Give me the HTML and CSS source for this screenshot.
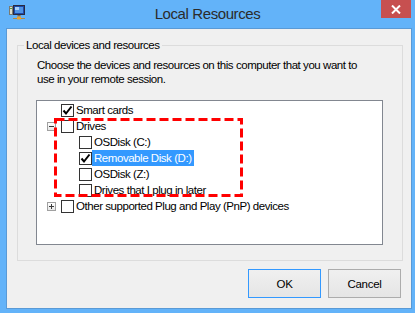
FILE: index.html
```html
<!DOCTYPE html>
<html>
<head>
<meta charset="utf-8">
<link rel="stylesheet" href="styles.css">
</head>
<body>
<div class="window">
  <div class="titlebar">
    <svg class="app-icon" width="20" height="16" viewBox="0 0 20 16">
      <rect x="1.5" y="2.5" width="3" height="8" fill="#dcdccc" stroke="#7a7a70"/>
      <rect x="2" y="4" width="2" height="1" fill="#5aa040"/>
      <rect x="5.5" y="1.5" width="11" height="9" fill="#1c4aa8" stroke="#2a2a40"/>
      <rect x="7" y="3" width="8" height="6" fill="#4f94e6"/>
      <rect x="7" y="3" width="4" height="3" fill="#a8d0f8"/>
      <rect x="9.5" y="11" width="3" height="1.5" fill="#6a6a6a"/>
      <line x1="5" y1="14.5" x2="17" y2="14.5" stroke="#b88a3a"/>
      <rect x="9" y="12.5" width="4" height="3" fill="#e8a030"/>
    </svg>
    <div class="title">Local Resources</div>
    <div class="close">
      <svg width="10" height="9" viewBox="0 0 10 9"><path d="M1 0.5 L9 8.5 M9 0.5 L1 8.5" stroke="#fff" stroke-width="2"/></svg>
    </div>
  </div>
  <div class="client">
    <fieldset class="group">
      <legend class="group-label">Local devices and resources</legend>
      <div class="group-body">
        <p class="desc">Choose the devices and resources on this computer that you want to<br>use in your remote session.</p>
        <div class="tree">
          <div class="row">
            <span class="slot"></span>
            <span class="cb checked"><svg width="11" height="11" viewBox="0 0 11 11"><polyline points="1.5,5.5 4,8.5 9.5,1.5" fill="none" stroke="#000" stroke-width="2"/></svg></span>
            <span class="label">Smart cards</span>
          </div>
          <div class="row">
            <span class="slot exp"><svg width="7" height="7" viewBox="0 0 7 7"><line x1="1" y1="3.5" x2="6" y2="3.5" stroke="#3a3a3a"/></svg></span>
            <span class="cb"></span>
            <span class="label">Drives</span>
          </div>
          <div class="row lvl1">
            <span class="cb"></span>
            <span class="label">OSDisk (C:)</span>
          </div>
          <div class="row lvl1">
            <span class="cb checked"><svg width="11" height="11" viewBox="0 0 11 11"><polyline points="1.5,5.5 4,8.5 9.5,1.5" fill="none" stroke="#000" stroke-width="2"/></svg></span>
            <span class="label selected">Removable Disk (D:)</span>
          </div>
          <div class="row lvl1">
            <span class="cb"></span>
            <span class="label">OSDisk (Z:)</span>
          </div>
          <div class="row lvl1">
            <span class="cb"></span>
            <span class="label">Drives that I plug in later</span>
          </div>
          <div class="row">
            <span class="slot exp"><svg width="7" height="7" viewBox="0 0 7 7"><line x1="1" y1="3.5" x2="6" y2="3.5" stroke="#3a3a3a"/><line x1="3.5" y1="1" x2="3.5" y2="6" stroke="#3a3a3a"/></svg></span>
            <span class="cb"></span>
            <span class="label">Other supported Plug and Play (PnP) devices</span>
          </div>
          <svg class="marker" width="189" height="79" viewBox="0 0 189 79">
            <rect x="1.5" y="1.5" width="186" height="76" fill="none" stroke="#ff0000" stroke-width="3" stroke-dasharray="9 4"/>
          </svg>
        </div>
      </div>
    </fieldset>
    <div class="buttons">
      <button class="btn default">OK</button>
      <button class="btn">Cancel</button>
    </div>
  </div>
</div>
</body>
</html>
```

FILE: styles.css
```css
* { box-sizing: border-box; }
html, body { margin: 0; padding: 0; }
body {
  width: 415px;
  height: 313px;
  overflow: hidden;
  background: #63b3f9;
  font-family: "Liberation Sans", Arial, sans-serif;
  font-size: 11.5px;
  letter-spacing: -0.45px;
  color: #000;
}
.window {
  width: 415px;
  height: 313px;
  display: flex;
  flex-direction: column;
}
.titlebar {
  height: 28px;
  display: grid;
  grid-template-columns: 1fr auto 1fr;
  align-items: start;
}
.app-icon {
  justify-self: start;
  margin: 4px 0 0 8px;
}
.title {
  font-size: 15px;
  line-height: 20px;
  margin-top: 4px;
  color: #2b2b2b;
  letter-spacing: -0.4px;
}
.close {
  justify-self: end;
  width: 30px;
  height: 18px;
  margin-right: 4px;
  background: #c75050;
  display: flex;
  align-items: center;
  justify-content: center;
}
.client {
  margin-left: 6px;
  width: 406px;
  height: 281px;
  background: #f0f0f0;
  border: 1px solid #5a9ad6;
  display: flex;
  flex-direction: column;
}
.group {
  margin: 8px 0 0 10px;
  width: 386px;
  border: 1px solid #dcdcdc;
  padding: 5px 0 15px 0;
  min-width: 0;
}
.group-label {
  margin-left: 6px;
  padding: 0 2px;
  line-height: 16px;
}
.group-body {
  padding-left: 18px;
}
.desc {
  margin: 0 0 14px 1px;
  line-height: 14px;
}
.tree {
  position: relative;
  width: 347px;
  height: 145px;
  background: #fff;
  border: 1px solid #828790;
  padding-top: 1px;
}
.row {
  display: flex;
  align-items: center;
  height: 16px;
  padding-left: 10px;
}
.row.lvl1 { padding-left: 42px; }
.slot {
  width: 9px;
  height: 9px;
  margin-right: 5px;
  flex: none;
}
.slot.exp {
  border: 1px solid #a0a0a0;
  background: linear-gradient(#ffffff, #e6e6e6);
  display: flex;
  align-items: center;
  justify-content: center;
}
.slot.exp svg { display: block; }
.cb {
  width: 13px;
  height: 13px;
  border: 1px solid #333;
  background: #fff;
  flex: none;
  display: flex;
  align-items: center;
  justify-content: center;
}
.cb svg { display: block; }
.label {
  padding: 0 2px;
  height: 16px;
  line-height: 16px;
  white-space: nowrap;
}
.label.selected {
  background: #3399ff;
  color: #fff;
}
.marker {
  position: absolute;
  left: 17px;
  top: 17px;
}
.buttons {
  display: flex;
  justify-content: flex-end;
  gap: 7px;
  margin: 8px 10px 0 0;
}
.btn {
  width: 73px;
  height: 29px;
  font-family: "Liberation Sans", Arial, sans-serif;
  font-size: 11.5px;
  letter-spacing: -0.3px;
  color: #000;
  border: 1px solid #acacac;
  background: linear-gradient(#f0f0f0, #e5e5e5);
  padding: 0;
}
.btn.default {
  border-color: #3399ff;
}
```
